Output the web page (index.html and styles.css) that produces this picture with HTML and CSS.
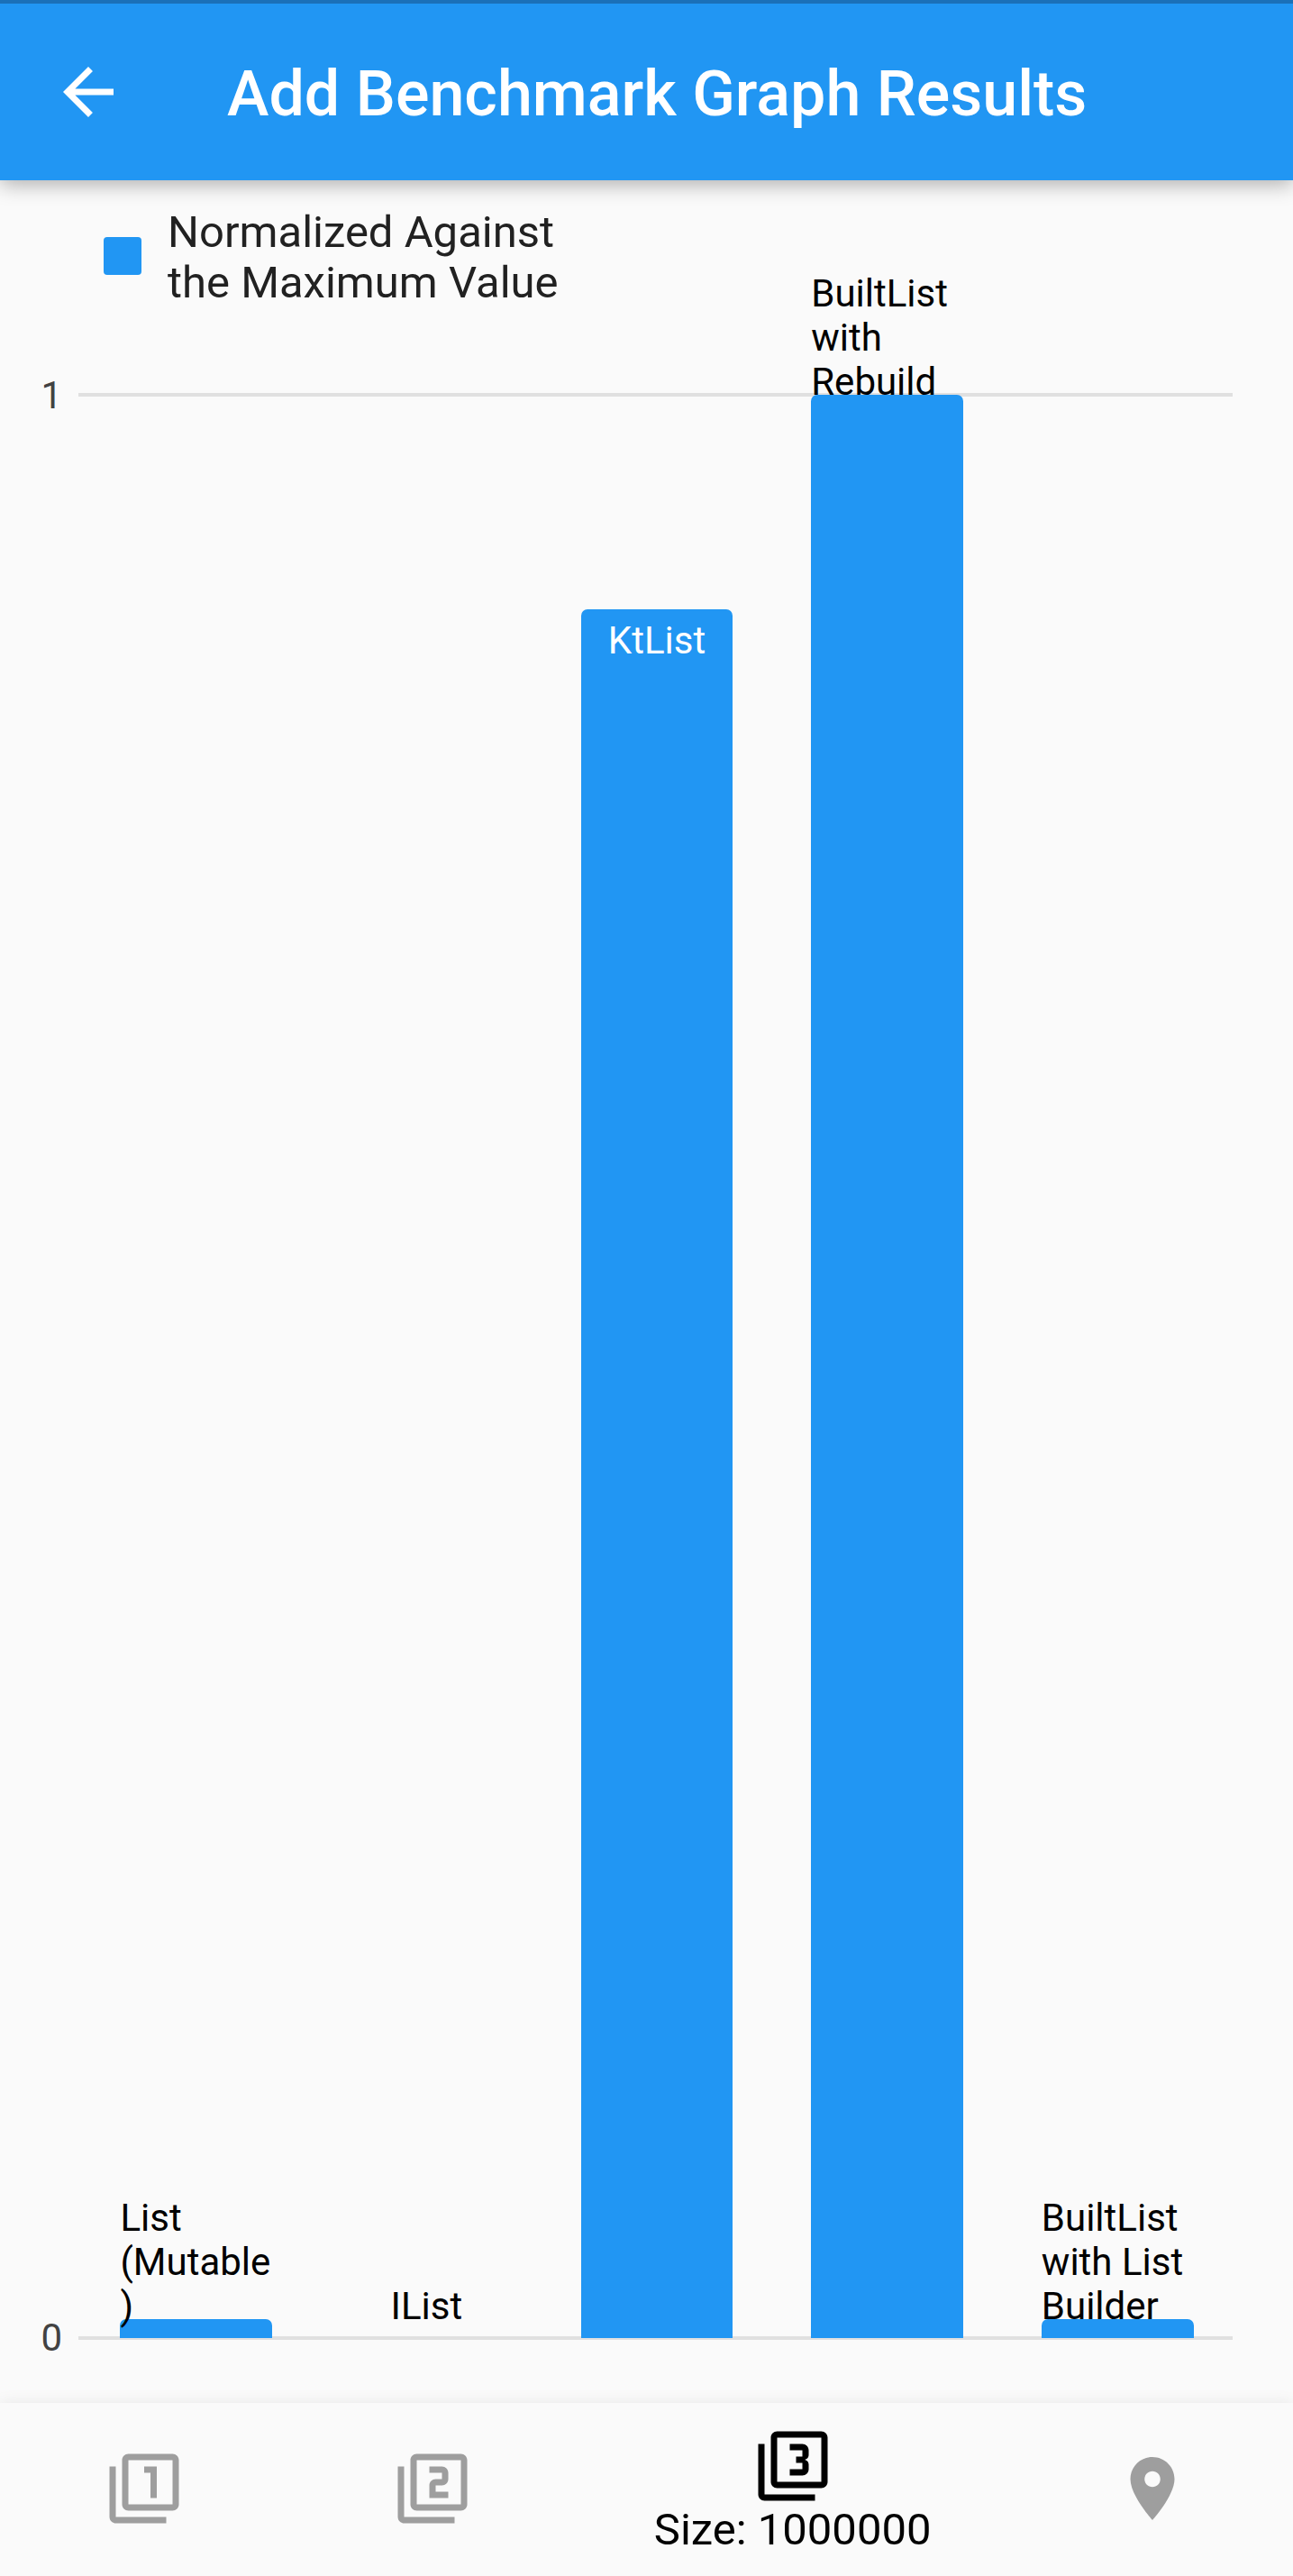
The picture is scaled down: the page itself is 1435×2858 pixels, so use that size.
FILE: index.html
```html
<!DOCTYPE html>
<html lang="en">
<head>
<meta charset="utf-8">
<meta name="viewport" content="width=device-width, initial-scale=1">
<title>Add Benchmark Graph Results</title>
<link rel="stylesheet" href="styles.css">
</head>
<body>
<header class="app-bar">
  <button class="back" type="button" aria-label="Back">
    <svg class="icon" viewBox="0 0 24 24"><path d="M20 11H7.83l5.59-5.59L12 4l-8 8 8 8 1.41-1.41L7.83 13H20v-2z"/></svg>
  </button>
  <h1 class="title">Add Benchmark Graph Results</h1>
</header>

<main class="chart">
  <div class="legend">
    <span class="swatch"></span>
    <span class="legend-text">Normalized Against the Maximum Value</span>
  </div>
  <div class="graph">
    <div class="axis"><span>1</span><span>0</span></div>
    <div class="plot">
      <div class="gridlines"><i class="line"></i><i class="line"></i></div>
      <div class="bars">
        <div class="slot">
          <span class="label">List (Mutable)</span>
          <div class="bar" style="height: 0.98%"></div>
        </div>
        <div class="slot">
          <span class="label label-single">IList</span>
          <div class="bar" style="height: 0%"></div>
        </div>
        <div class="slot">
          <div class="bar" style="height: 88.96%"><span class="label label-inside">KtList</span></div>
        </div>
        <div class="slot">
          <span class="label">BuiltList with Rebuild</span>
          <div class="bar" style="height: 100%"></div>
        </div>
        <div class="slot">
          <span class="label">BuiltList with List Builder</span>
          <div class="bar" style="height: 0.98%"></div>
        </div>
      </div>
    </div>
  </div>
</main>

<nav class="bottom-nav">
  <button class="tab" type="button" aria-label="First size">
    <svg class="icon" viewBox="0 0 24 24"><path d="M3 5H1v16c0 1.100.9 2 2 2h16v-2H3V5zm11 10h2V5h-4v2h2v8zm7-14H7c-1.100 0-2 .9-2 2v14c0 1.100.9 2 2 2h14c1.100 0 2-.9 2-2V3c0-1.100-.9-2-2-2zm0 16H7V3h14v14z"/></svg>
  </button>
  <button class="tab" type="button" aria-label="Second size">
    <svg class="icon" viewBox="0 0 24 24"><path d="M3 5H1v16c0 1.100.9 2 2 2h16v-2H3V5zm18-4H7c-1.100 0-2 .9-2 2v14c0 1.100.9 2 2 2h14c1.100 0 2-.9 2-2V3c0-1.100-.9-2-2-2zm0 16H7V3h14v14zm-4-4h-4v-2h2c1.100 0 2-.89 2-2V7c0-1.110-.9-2-2-2h-4v2h4v2h-2c-1.100 0-2 .89-2 2v4h6v-2z"/></svg>
  </button>
  <button class="tab tab-active" type="button" aria-current="page">
    <svg class="icon" viewBox="0 0 24 24"><path d="M21 1H7c-1.100 0-2 .9-2 2v14c0 1.100.9 2 2 2h14c1.100 0 2-.9 2-2V3c0-1.100-.9-2-2-2zm0 16H7V3h14v14zM3 5H1v16c0 1.100.9 2 2 2h16v-2H3V5zm14 8v-1.500c0-.83-.67-1.500-1.500-1.500.83 0 1.500-.67 1.500-1.500V7c0-1.110-.9-2-2-2h-4v2h4v2h-2v2h2v2h-4v2h4c1.100 0 2-.89 2-2z"/></svg>
    <span>Size: 1000000</span>
  </button>
  <button class="tab" type="button" aria-label="Place">
    <svg class="icon" viewBox="0 0 24 24"><path d="M12 2C8.130 2 5 5.130 5 9c0 5.250 7 13 7 13s7-7.750 7-13c0-3.870-3.130-7-7-7zm0 9.500c-1.380 0-2.500-1.120-2.500-2.500s1.120-2.500 2.500-2.500 2.500 1.120 2.500 2.500-1.120 2.500-2.500 2.500z"/></svg>
  </button>
</nav>
</body>
</html>
```
FILE: styles.css
```css
* {
  box-sizing: border-box;
}

body {
  margin: 0;
  min-height: 100vh;
  display: flex;
  flex-direction: column;
  overflow-x: hidden;
  background: #fafafa;
  color: #000;
  font-family: Roboto, "Liberation Sans", sans-serif;
}

button {
  margin: 0;
  padding: 0;
  border: 0;
  background: none;
  color: inherit;
  font: inherit;
}

.icon {
  display: block;
  width: 84px;
  height: 84px;
  fill: currentColor;
}

.app-bar {
  display: flex;
  align-items: center;
  gap: 112px;
  height: 200px;
  padding: 0 56px;
  border-top: 4px solid #1a70b8;
  background: #2196f3;
  color: #fff;
  box-shadow: 0 4px 22px rgba(0, 0, 0, 0.32);
}

.title {
  margin: 0;
  padding-top: 3px;
  font-size: 70px;
  font-weight: 500;
  line-height: 82px;
  white-space: nowrap;
}

.chart {
  flex: 1;
  display: flex;
  flex-direction: column;
  gap: 96px;
  padding: 30px 67px 72px 0;
}

.legend {
  display: flex;
  align-items: flex-start;
  gap: 29px;
  padding-left: 115px;
}

.swatch {
  width: 42px;
  height: 42px;
  margin-top: 33px;
  border-radius: 4px;
  background: #2196f3;
}

.legend-text {
  max-width: 450px;
  color: #212121;
  font-size: 49px;
  line-height: 56px;
}

.graph {
  flex: 1;
  display: flex;
  gap: 18px;
}

.axis {
  display: flex;
  flex-direction: column;
  justify-content: space-between;
  width: 69px;
  margin: -24px 0;
  color: #424242;
  font-size: 42px;
  line-height: 49px;
  text-align: right;
}

.plot {
  flex: 1;
  display: grid;
}

.gridlines,
.bars {
  grid-area: 1 / 1;
}

.gridlines {
  display: flex;
  flex-direction: column;
  justify-content: space-between;
  margin: -2px 0;
}

.line {
  height: 4px;
  background: #e0e0e0;
}

.bars {
  display: flex;
  padding-left: 3px;
}

.slot {
  flex: 1;
  display: flex;
  flex-direction: column;
  justify-content: flex-end;
  align-items: center;
}

.bar {
  flex-shrink: 0;
  width: 66%;
  border-radius: 7px 7px 0 0;
  background: #2196f3;
}

.label {
  z-index: 1;
  flex-shrink: 0;
  width: 66%;
  margin-bottom: -10px;
  font-size: 42px;
  line-height: 49px;
  overflow-wrap: anywhere;
}

.label-single {
  margin-bottom: 11px;
  text-align: center;
}

.label-inside {
  display: block;
  width: 100%;
  margin: 0;
  padding-top: 10px;
  color: #fff;
  text-align: center;
}

.bottom-nav {
  display: grid;
  grid-template-columns: 22.3% 22.3% 33.4% 22.3%;
  height: 192px;
  background: #fafafa;
  box-shadow: 0 0 16px rgba(0, 0, 0, 0.08);
}

.tab {
  display: flex;
  flex-direction: column;
  align-items: center;
  padding-top: 53px;
  color: #9e9e9e;
  font-size: 49px;
  line-height: 57px;
}

.tab-active {
  padding-top: 28px;
  color: #000;
}
```
